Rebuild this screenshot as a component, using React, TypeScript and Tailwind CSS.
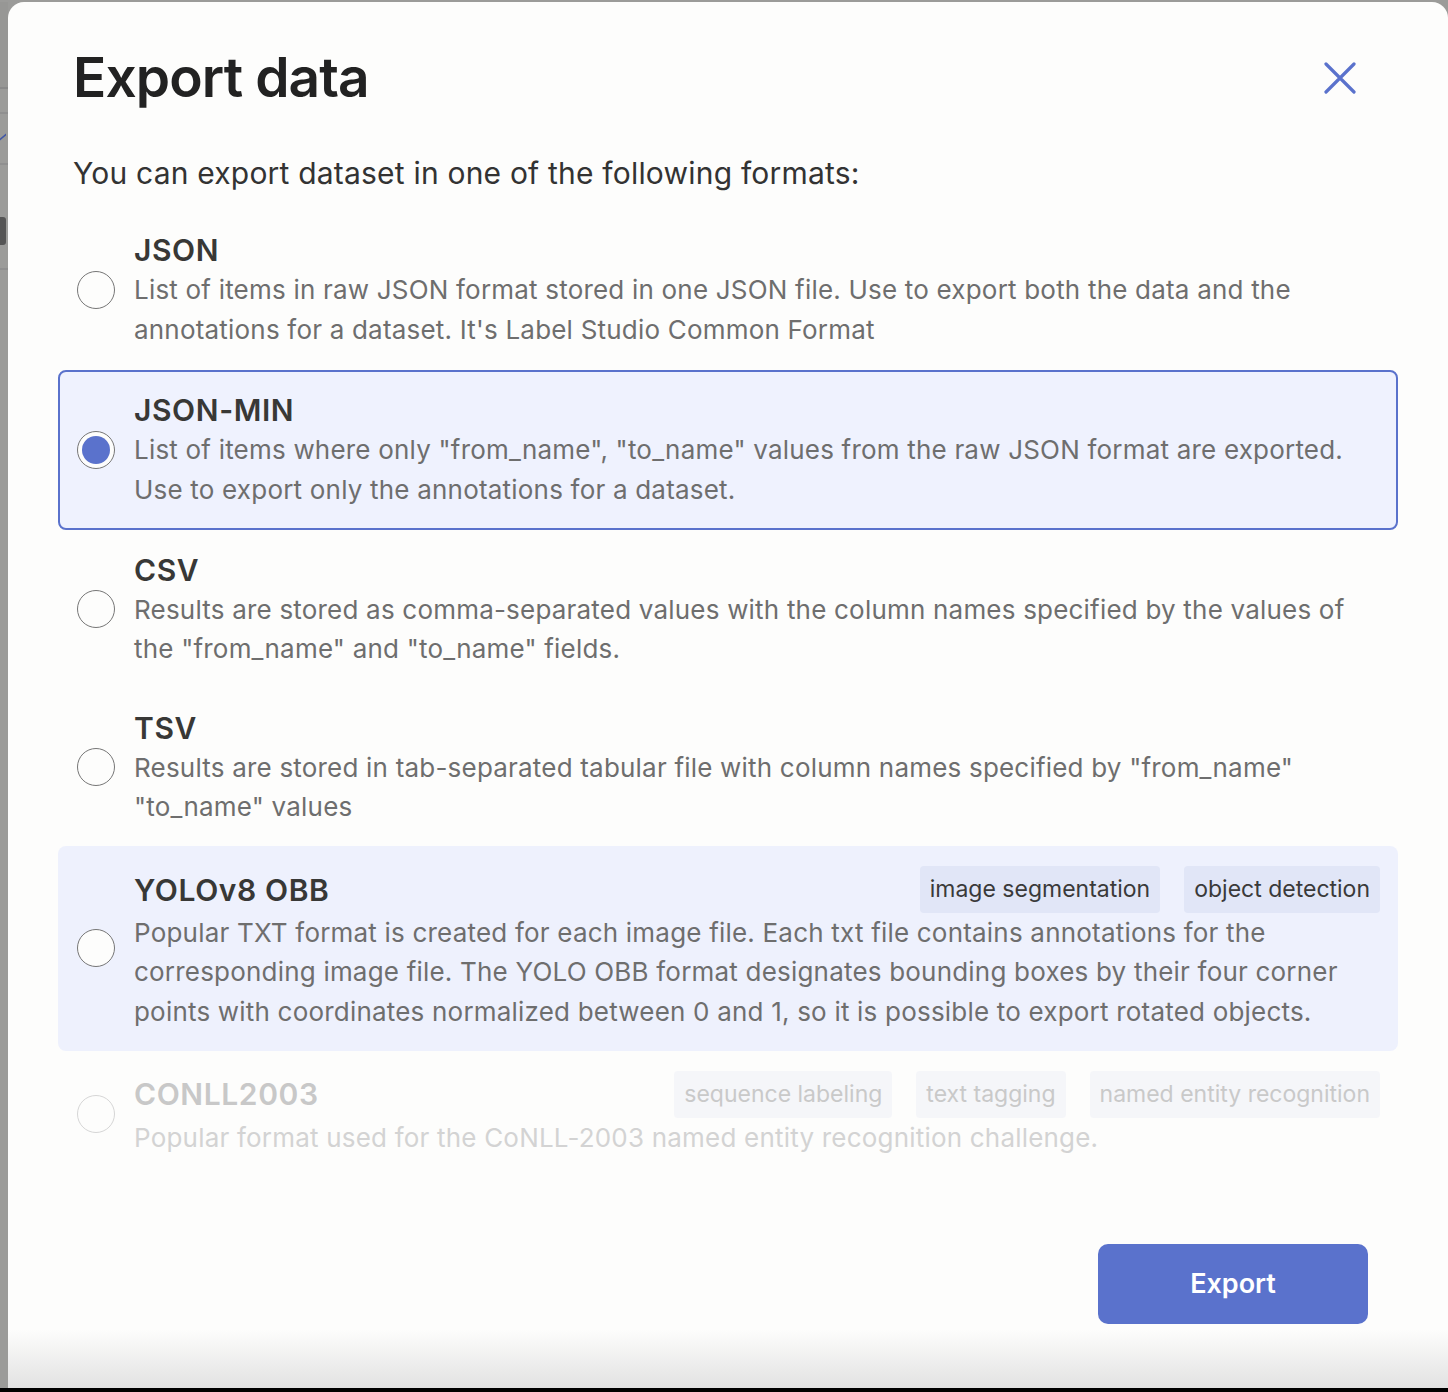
import React from "react";

type Fmt = {
  title: string;
  lines: string[];
  tags?: string[];
  selected?: boolean;
  hovered?: boolean;
  disabled?: boolean;
  lead: string;
};

const formats: Fmt[] = [
  {
    title: "JSON",
    lead: "leading-[40px]",
    lines: [
      "List of items in raw JSON format stored in one JSON file. Use to export both the data and the",
      "annotations for a dataset. It's Label Studio Common Format",
    ],
  },
  {
    title: "JSON-MIN",
    selected: true,
    lead: "leading-[40px]",
    lines: [
      'List of items where only "from_name", "to_name" values from the raw JSON format are exported.',
      "Use to export only the annotations for a dataset.",
    ],
  },
  {
    title: "CSV",
    lead: "leading-[39px]",
    lines: [
      'Results are stored as comma-separated values with the column names specified by the values of',
      'the "from_name" and "to_name" fields.',
    ],
  },
  {
    title: "TSV",
    lead: "leading-[39px]",
    lines: [
      'Results are stored in tab-separated tabular file with column names specified by "from_name"',
      '"to_name" values',
    ],
  },
  {
    title: "YOLOv8 OBB",
    hovered: true,
    lead: "leading-[39.3px]",
    tags: ["image segmentation", "object detection"],
    lines: [
      "Popular TXT format is created for each image file. Each txt file contains annotations for the",
      "corresponding image file. The YOLO OBB format designates bounding boxes by their four corner",
      "points with coordinates normalized between 0 and 1, so it is possible to export rotated objects.",
    ],
  },
  {
    title: "CONLL2003",
    disabled: true,
    lead: "leading-[39px]",
    tags: ["sequence labeling", "text tagging", "named entity recognition"],
    lines: ["Popular format used for the CoNLL-2003 named entity recognition challenge."],
  },
];

function Radio({ selected, disabled }: { selected?: boolean; disabled?: boolean }) {
  return (
    <div
      className={`flex h-[38px] w-[38px] shrink-0 items-center justify-center rounded-full border bg-[#fdfdfc] ${
        disabled ? "border-[#d6d6d6]" : "border-[#767676]"
      }`}
    >
      {selected && <div className="h-[28px] w-[28px] rounded-full bg-[#5a72cc]" />}
    </div>
  );
}

function Row({ f }: { f: Fmt }) {
  const box = f.selected
    ? "border-[#5a72cc] bg-[#eff2fe]"
    : f.hovered
    ? "border-transparent bg-[#eef1fd]"
    : "border-transparent";
  return (
    <div className={`flex items-center gap-[19px] rounded-[8px] border-2 py-[18px] pl-[17px] pr-[16px] ${box}`}>
      <Radio selected={f.selected} disabled={f.disabled} />
      <div className="min-w-0 flex-1">
        <div className={`flex items-center justify-between ${f.tags ? "h-[47px]" : "h-[40px]"}`}>
          <div
            className={`text-[30px] font-semibold leading-[40px] tracking-[0.6px] ${
              f.disabled ? "text-[#c8c8c8]" : "text-[#383836]"
            }`}
          >
            {f.title}
          </div>
          {f.tags && (
            <div className="flex gap-[24px]">
              {f.tags.map((t) => (
                <div
                  key={t}
                  className={`flex h-[47px] items-center rounded-[4px] px-[10px] text-[23px] ${
                    f.disabled ? "bg-[#f5f6f9] text-[#c9c9c9]" : "bg-[#e1e6f7] text-[#3a3a3a]"
                  }`}
                >
                  {t}
                </div>
              ))}
            </div>
          )}
        </div>
        <div
          className={`whitespace-nowrap text-[26px] tracking-[0.2px] ${f.lead} ${
            f.disabled ? "text-[#d3d3d3]" : "text-[#6e6e6e]"
          }`}
        >
          {f.lines.map((l, i) => (
            <div key={i}>{l}</div>
          ))}
        </div>
      </div>
    </div>
  );
}

export default function App() {
  return (
    <div className="flex h-[1392px] w-[1448px] flex-col overflow-hidden bg-[#9b9b99] font-[Inter,sans-serif]">
      <div className="flex min-h-0 flex-1 pt-[2px]">
        {/* backdrop strip */}
        <div className="flex w-[8px] shrink-0 flex-col bg-[#9b9b99]">
          <div className="h-[87px] border-b-2 border-[#8a8a8a] bg-[#979795]" />
          <div className="h-[25px] border-b-2 border-[#8f8f8f]" />
          <div className="h-[22px]" />
          <div className="h-[10px] w-[6px] border-t-2 border-[#4057a8] -skew-y-[40deg]" />
          <div className="h-[19px] border-b-2 border-[#8f8f8f]" />
          <div className="h-[52px]" />
          <div className="h-[28px] w-[6px] rounded-r-[3px] bg-[#555]" />
          <div className="h-[25px] border-b-2 border-[#8f8f8f]" />
        </div>
        {/* modal */}
        <div className="flex min-w-0 flex-1 flex-col rounded-t-[16px] bg-[#fdfdfc]">
          <div className="flex flex-1 flex-col px-[50px]">
            <div className="flex items-center justify-between pl-[15px] pr-[36px] pt-[48px]">
              <h1 className="text-[55px] font-semibold leading-[55px] tracking-[-0.9px] text-[#222]">Export data</h1>
              <button className="flex h-[44px] w-[44px] items-center justify-center text-[#5a72cc]">
                <svg width="32" height="32" viewBox="0 0 32 32" fill="none" stroke="currentColor" strokeWidth="3.2" strokeLinecap="round">
                  <path d="M2 2 L30 30 M30 2 L2 30" />
                </svg>
              </button>
            </div>
            <p className="mt-[48px] pl-[15px] text-[30px] leading-[40px] tracking-[0.2px] text-[#333]">
              You can export dataset in one of the following formats:
            </p>
            <div className="mt-[17px] flex flex-col">
              {formats.map((f) => (
                <Row key={f.title} f={f} />
              ))}
            </div>
            <div className="flex flex-1 items-end justify-end pb-[6px] pr-[30px]">
              <button className="h-[80px] w-[270px] rounded-[10px] bg-[#5a72cc] text-[27px] font-semibold text-white">
                Export
              </button>
            </div>
          </div>
          <div className="h-[58px] shrink-0 bg-gradient-to-b from-[#fdfdfc] to-[#e2e2e2]" />
        </div>
      </div>
      <div className="h-[4px] shrink-0 bg-black" />
    </div>
  );
}
